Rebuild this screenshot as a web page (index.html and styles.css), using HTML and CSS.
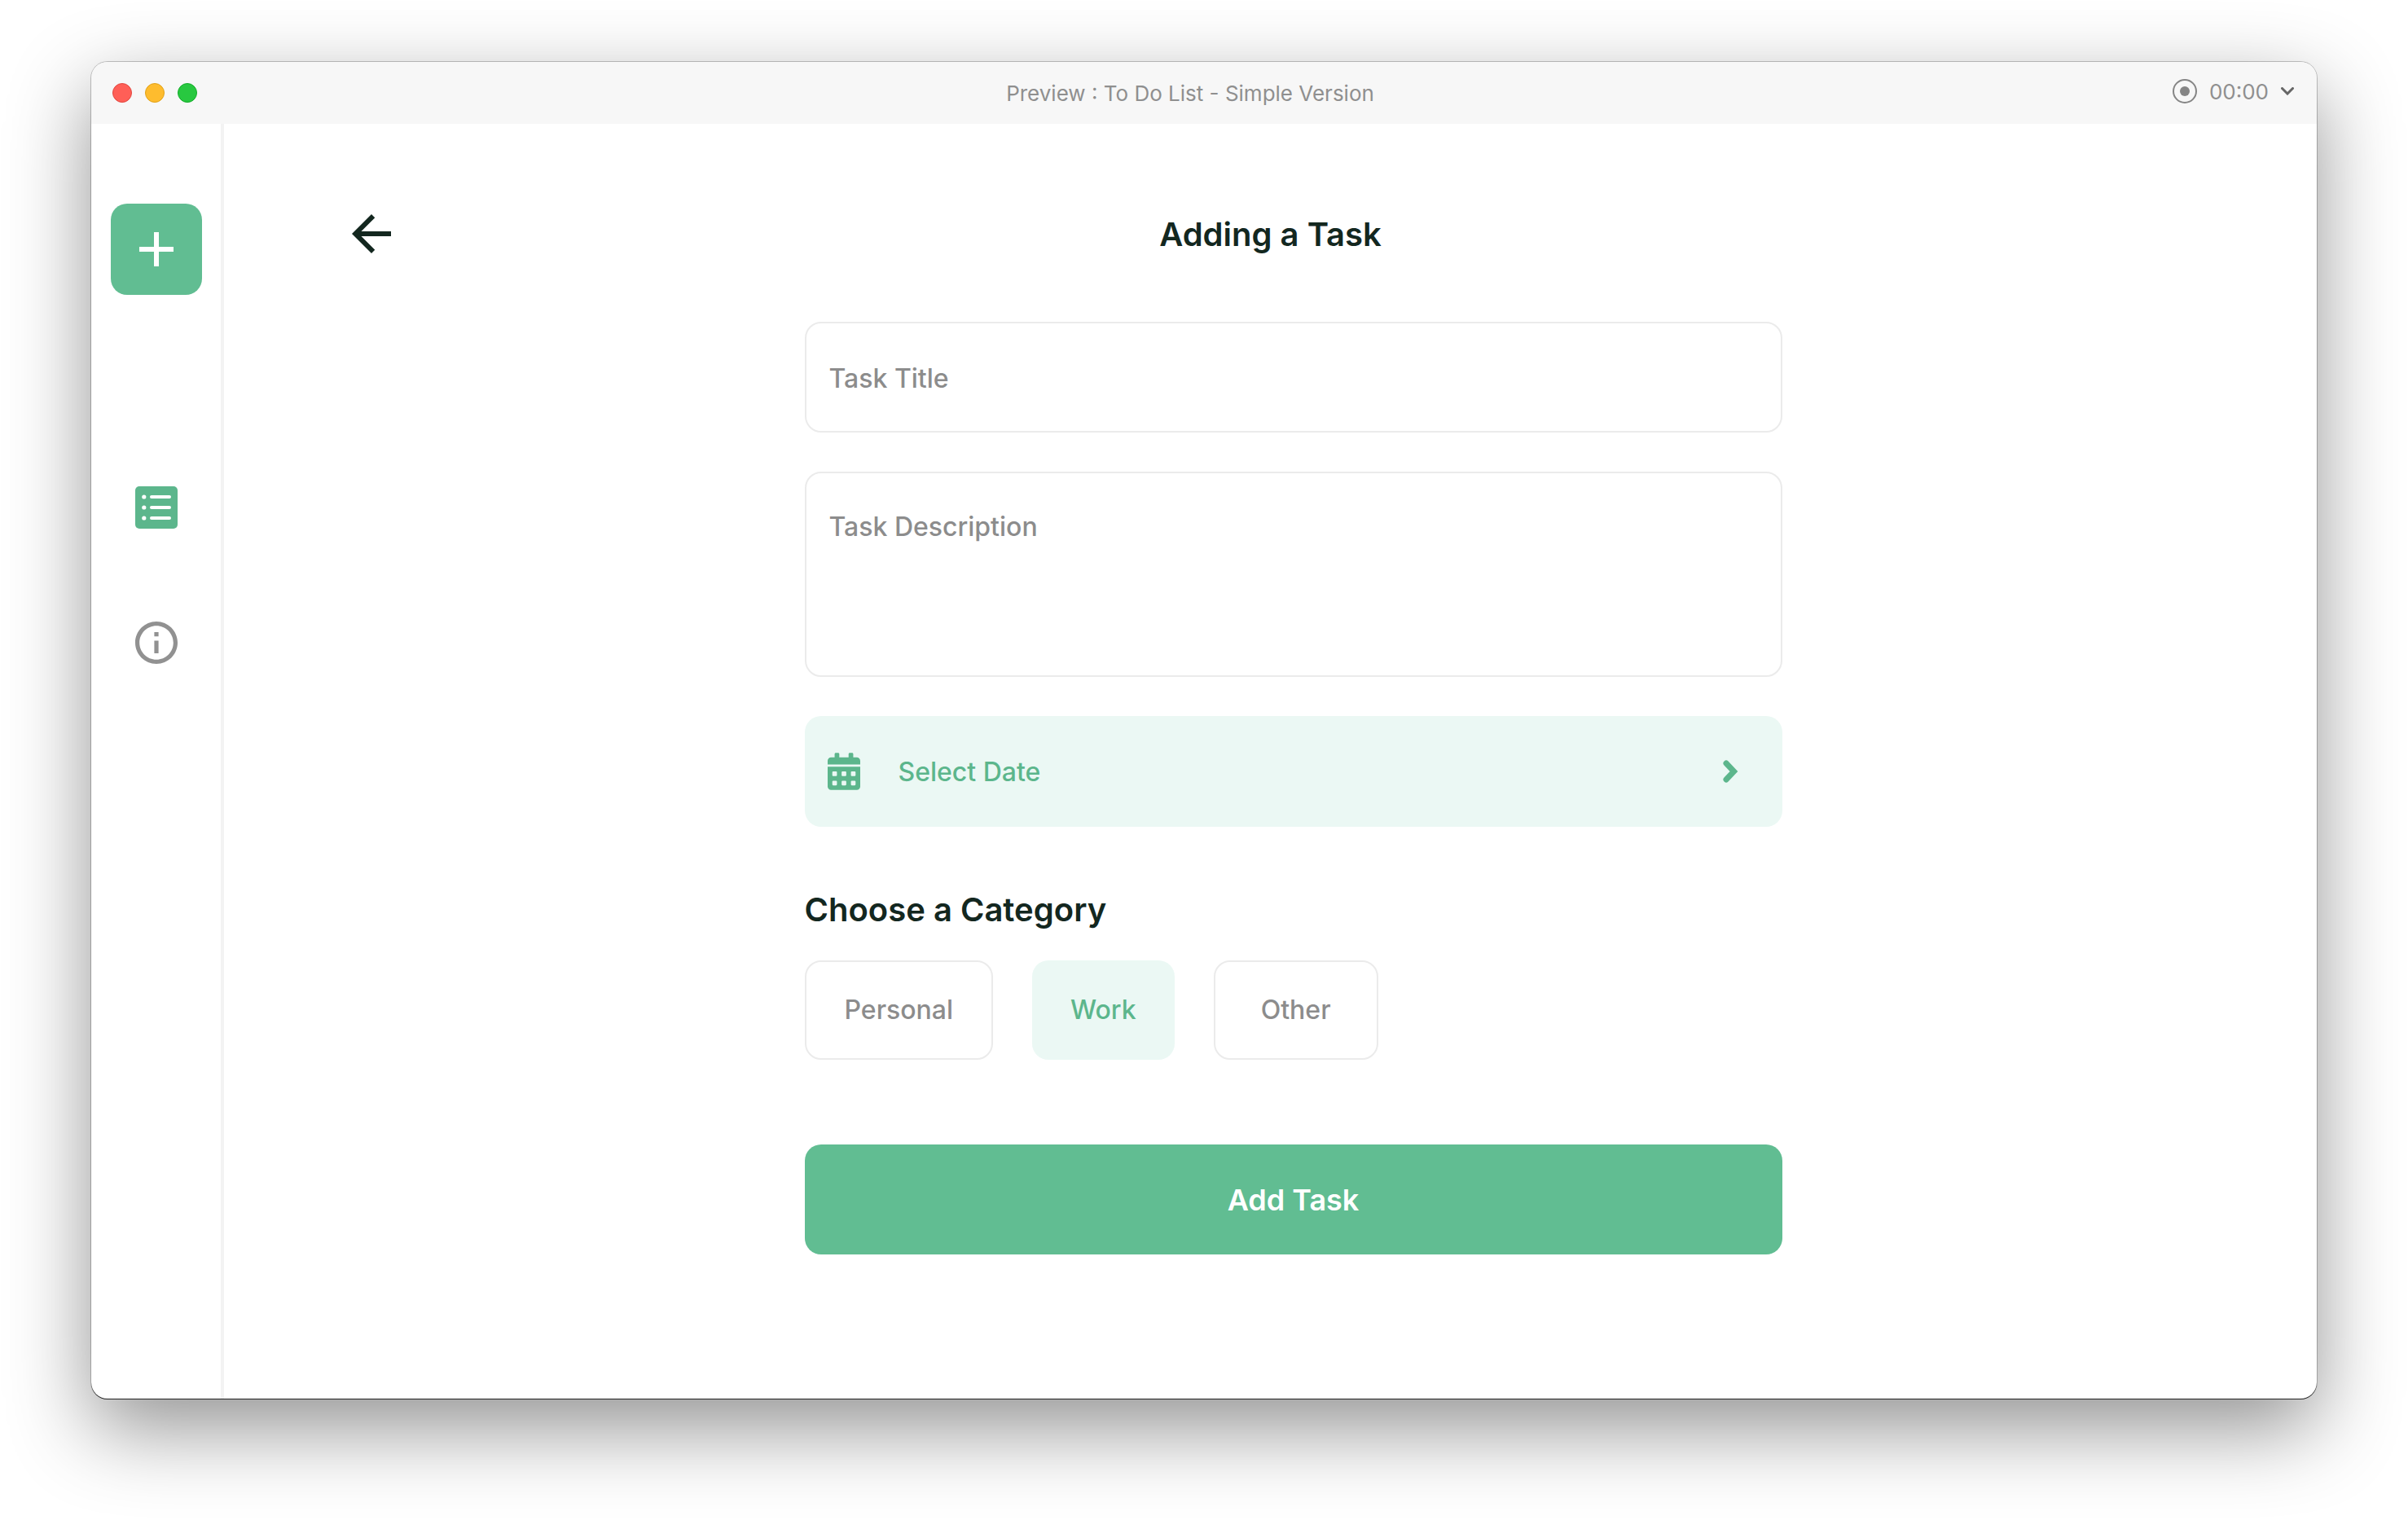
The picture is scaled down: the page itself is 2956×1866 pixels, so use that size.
FILE: index.html
```html
<!DOCTYPE html>
<html lang="en">
<head>
    <meta charset="UTF-8">
    <meta name="viewport" content="width=device-width, initial-scale=1.0">
    <title>To Do List - Simple Version</title>
    <link rel="stylesheet" href="styles.css">
</head>
<body>
    <div class="window">
        <header class="titlebar">
            <div class="window-buttons">
                <button class="dot dot-close" type="button" aria-label="Close"></button>
                <button class="dot dot-minimize" type="button" aria-label="Minimize"></button>
                <button class="dot dot-zoom" type="button" aria-label="Zoom"></button>
            </div>
            <div class="window-title">Preview : To Do List - Simple Version</div>
            <button class="recorder" type="button">
                <svg width="30" height="30" viewBox="0 0 30 30" aria-hidden="true">
                    <circle cx="15" cy="15" r="14" fill="none" stroke="#858585" stroke-width="2"/>
                    <circle cx="15" cy="15" r="6" fill="#858585"/>
                </svg>
                <span>00:00</span>
                <svg width="16" height="10" viewBox="0 0 16 10" aria-hidden="true">
                    <path d="M1.5 1.5L8 8l6.500-6.500" fill="none" stroke="#666" stroke-width="3" stroke-linecap="round"/>
                </svg>
            </button>
        </header>

        <div class="content">
            <nav class="sidebar">
                <button class="add-button" type="button" aria-label="New task">
                    <svg width="72" height="72" viewBox="0 0 24 24" aria-hidden="true">
                        <path d="M19 13h-6v6h-2v-6H5v-2h6V5h2v6h6v2z" fill="#fff"/>
                    </svg>
                </button>
                <a class="nav-link" href="#tasks" aria-label="Tasks">
                    <svg width="52" height="52" viewBox="0 0 52 52" aria-hidden="true">
                        <rect width="52" height="52" rx="5" fill="#5cb68c"/>
                        <g fill="#fff">
                            <circle cx="10.800" cy="13" r="2.600"/>
                            <circle cx="10.800" cy="26" r="2.600"/>
                            <circle cx="10.800" cy="39" r="2.600"/>
                            <rect x="18" y="11" width="26" height="4" rx="2"/>
                            <rect x="18" y="24" width="26" height="4" rx="2"/>
                            <rect x="18" y="37" width="26" height="4" rx="2"/>
                        </g>
                    </svg>
                </a>
                <a class="nav-link" href="#about" aria-label="About">
                    <svg width="52" height="52" viewBox="2 2 20 20" aria-hidden="true">
                        <path d="M11 7h2v2h-2zm0 4h2v6h-2zm1-9C6.480 2 2 6.480 2 12s4.480 10 10 10 10-4.480 10-10S17.520 2 12 2zm0 18c-4.410 0-8-3.590-8-8s3.590-8 8-8 8 3.590 8 8-3.590 8-8 8z" fill="#919191"/>
                    </svg>
                </a>
            </nav>

            <main class="main">
                <div class="page-header">
                    <a class="back" href="#tasks" aria-label="Back">
                        <svg width="48" height="48" viewBox="4 4 16 16" aria-hidden="true">
                            <path d="M20 11H7.830l5.590-5.590L12 4l-8 8 8 8 1.410-1.410L7.830 13H20v-2z" fill="#13271f"/>
                        </svg>
                    </a>
                    <h1>Adding a Task</h1>
                </div>

                <form class="task-form">
                    <input class="field" type="text" placeholder="Task Title" aria-label="Task Title">
                    <textarea class="field field-description" placeholder="Task Description" aria-label="Task Description"></textarea>
                    <button class="date-button" type="button">
                        <svg width="40" height="46" viewBox="0 0 448 512" aria-hidden="true">
                            <path fill="#5cb68c" fill-rule="evenodd" d="M0 464c0 26.500 21.500 48 48 48h352c26.500 0 48-21.500 48-48V192H0v272zM332 256h40q12 0 12 12v40q0 12-12 12h-40q-12 0-12-12v-40q0-12 12-12zM332 384h40q12 0 12 12v40q0 12-12 12h-40q-12 0-12-12v-40q0-12 12-12zM204 256h40q12 0 12 12v40q0 12-12 12h-40q-12 0-12-12v-40q0-12 12-12zM204 384h40q12 0 12 12v40q0 12-12 12h-40q-12 0-12-12v-40q0-12 12-12zM76 256h40q12 0 12 12v40q0 12-12 12H76q-12 0-12-12v-40q0-12 12-12zM76 384h40q12 0 12 12v40q0 12-12 12H76q-12 0-12-12v-40q0-12 12-12zM400 64h-48V16c0-8.800-7.200-16-16-16h-32c-8.800 0-16 7.200-16 16v48H160V16c0-8.800-7.200-16-16-16h-32c-8.800 0-16 7.200-16 16v48H48C21.500 64 0 85.500 0 112v48h448v-48c0-26.500-21.500-48-48-48z"/>
                        </svg>
                        <span class="date-text">Select Date</span>
                        <svg width="19" height="28" viewBox="0 0 19 28" aria-hidden="true">
                            <path d="M4 4L13.500 14L4 24" fill="none" stroke="#5cb68c" stroke-width="7" stroke-linecap="round"/>
                        </svg>
                    </button>

                    <fieldset class="categories">
                        <legend>Choose a Category</legend>
                        <div class="category-list">
                            <label class="category"><input type="radio" name="category" value="personal"><span>Personal</span></label>
                            <label class="category"><input type="radio" name="category" value="work" checked><span>Work</span></label>
                            <label class="category category-wide"><input type="radio" name="category" value="other"><span>Other</span></label>
                        </div>
                    </fieldset>

                    <button class="submit" type="submit">Add Task</button>
                </form>
            </main>
        </div>
    </div>
</body>
</html>
```
FILE: styles.css
```css
* {
    box-sizing: border-box;
}
body {
    font-family: Inter, "Liberation Sans", sans-serif;
    background-color: #fff;
    color: #13271f;
    margin: 0;
    padding: 76px 112px 149px;
    min-height: 100vh;
    display: flex;
}
button {
    font-family: inherit;
    border: none;
    padding: 0;
    cursor: pointer;
}
svg {
    display: block;
    flex-shrink: 0;
}
.window {
    flex: 1;
    display: flex;
    flex-direction: column;
    background-color: #fff;
    border-radius: 20px;
    box-shadow: 0 1px 0 #222, 0 0 0 1px rgba(0, 0, 0, 0.22), 0 36px 100px rgba(0, 0, 0, 0.43);
}

/* title bar */
.titlebar {
    display: grid;
    grid-template-columns: 1fr auto 1fr;
    align-items: center;
    height: 76px;
    padding: 0 28px 0 26px;
    background-color: #f7f7f7;
    border-radius: 20px 20px 0 0;
    color: #8f8f8f;
    font-size: 26px;
}
.window-buttons {
    display: flex;
    gap: 16px;
}
.dot {
    width: 24px;
    height: 24px;
    border-radius: 50%;
}
.dot-close {
    background-color: #ff5f57;
    border: 1px solid #e2463f;
}
.dot-minimize {
    background-color: #febc2e;
    border: 1px solid #e1a116;
}
.dot-zoom {
    background-color: #28c840;
    border: 1px solid #12ac28;
}
.window-title {
    margin-right: 32px;
}
.recorder {
    justify-self: end;
    display: flex;
    align-items: center;
    gap: 15px;
    padding-bottom: 4px;
    background: none;
    color: #8f8f8f;
    font-size: 26px;
}

/* sidebar */
.content {
    flex: 1;
    display: flex;
}
.sidebar {
    display: flex;
    flex-direction: column;
    align-items: center;
    width: 163px;
    padding-top: 98px;
    border-right: 4px solid #f3f3f3;
}
.add-button {
    display: flex;
    align-items: center;
    justify-content: center;
    width: 112px;
    height: 112px;
    margin-bottom: 121px;
    border-radius: 20px;
    background-color: #61bd92;
}
.nav-link {
    margin-top: 114px;
}

/* page */
.main {
    flex: 1;
    padding: 110px 157px;
}
.page-header {
    display: grid;
    grid-template-columns: 1fr auto 1fr;
    align-items: center;
    margin-bottom: 83px;
}
.back {
    justify-self: start;
}
h1, legend {
    margin: 0;
    padding: 2px 0 0;
    font-size: 40px;
    font-weight: 600;
    line-height: 48px;
}
.task-form {
    display: flex;
    flex-direction: column;
    gap: 48px;
    max-width: 1256px;
    margin: 0 auto;
    padding-left: 56px;
}
.field {
    width: 100%;
    height: 136px;
    padding: 2px 28px 0;
    border: 2px solid #ebebeb;
    border-radius: 20px;
    background-color: #fff;
    color: #13271f;
    font-family: inherit;
    font-size: 32px;
    font-weight: 500;
    line-height: 40px;
}
.field::placeholder {
    color: #8c8c8c;
    opacity: 1;
}
.field-description {
    display: block;
    height: 252px;
    padding: 46px 28px;
    resize: none;
}
.date-button {
    display: flex;
    align-items: center;
    height: 136px;
    padding: 0 54px 0 28px;
    border-radius: 20px;
    background-color: #ebf8f4;
    color: #5cb68c;
    font-size: 32px;
    font-weight: 500;
}
.date-text {
    flex: 1;
    margin-left: 47px;
    text-align: left;
}
.categories {
    min-width: 0;
    margin: 28px 0 56px;
    padding: 0;
    border: none;
}
.category-list {
    display: flex;
    gap: 48px;
    margin-top: 38px;
}
.category input {
    position: absolute;
    opacity: 0;
}
.category span {
    display: block;
    padding: 39px 47px;
    border: 2px solid #ebebeb;
    border-radius: 20px;
    color: #8c8c8c;
    font-size: 32px;
    font-weight: 500;
    line-height: 40px;
    cursor: pointer;
}
.category-wide span {
    padding: 39px 56px;
}
.category input:checked + span {
    border-color: #ebf8f4;
    border-width: 2px 0;
    background-color: #ebf8f4;
    color: #5cb68c;
}
.submit {
    height: 135px;
    border-radius: 20px;
    background-color: #61bd92;
    color: #fff;
    font-size: 36px;
    font-weight: 600;
}
```
